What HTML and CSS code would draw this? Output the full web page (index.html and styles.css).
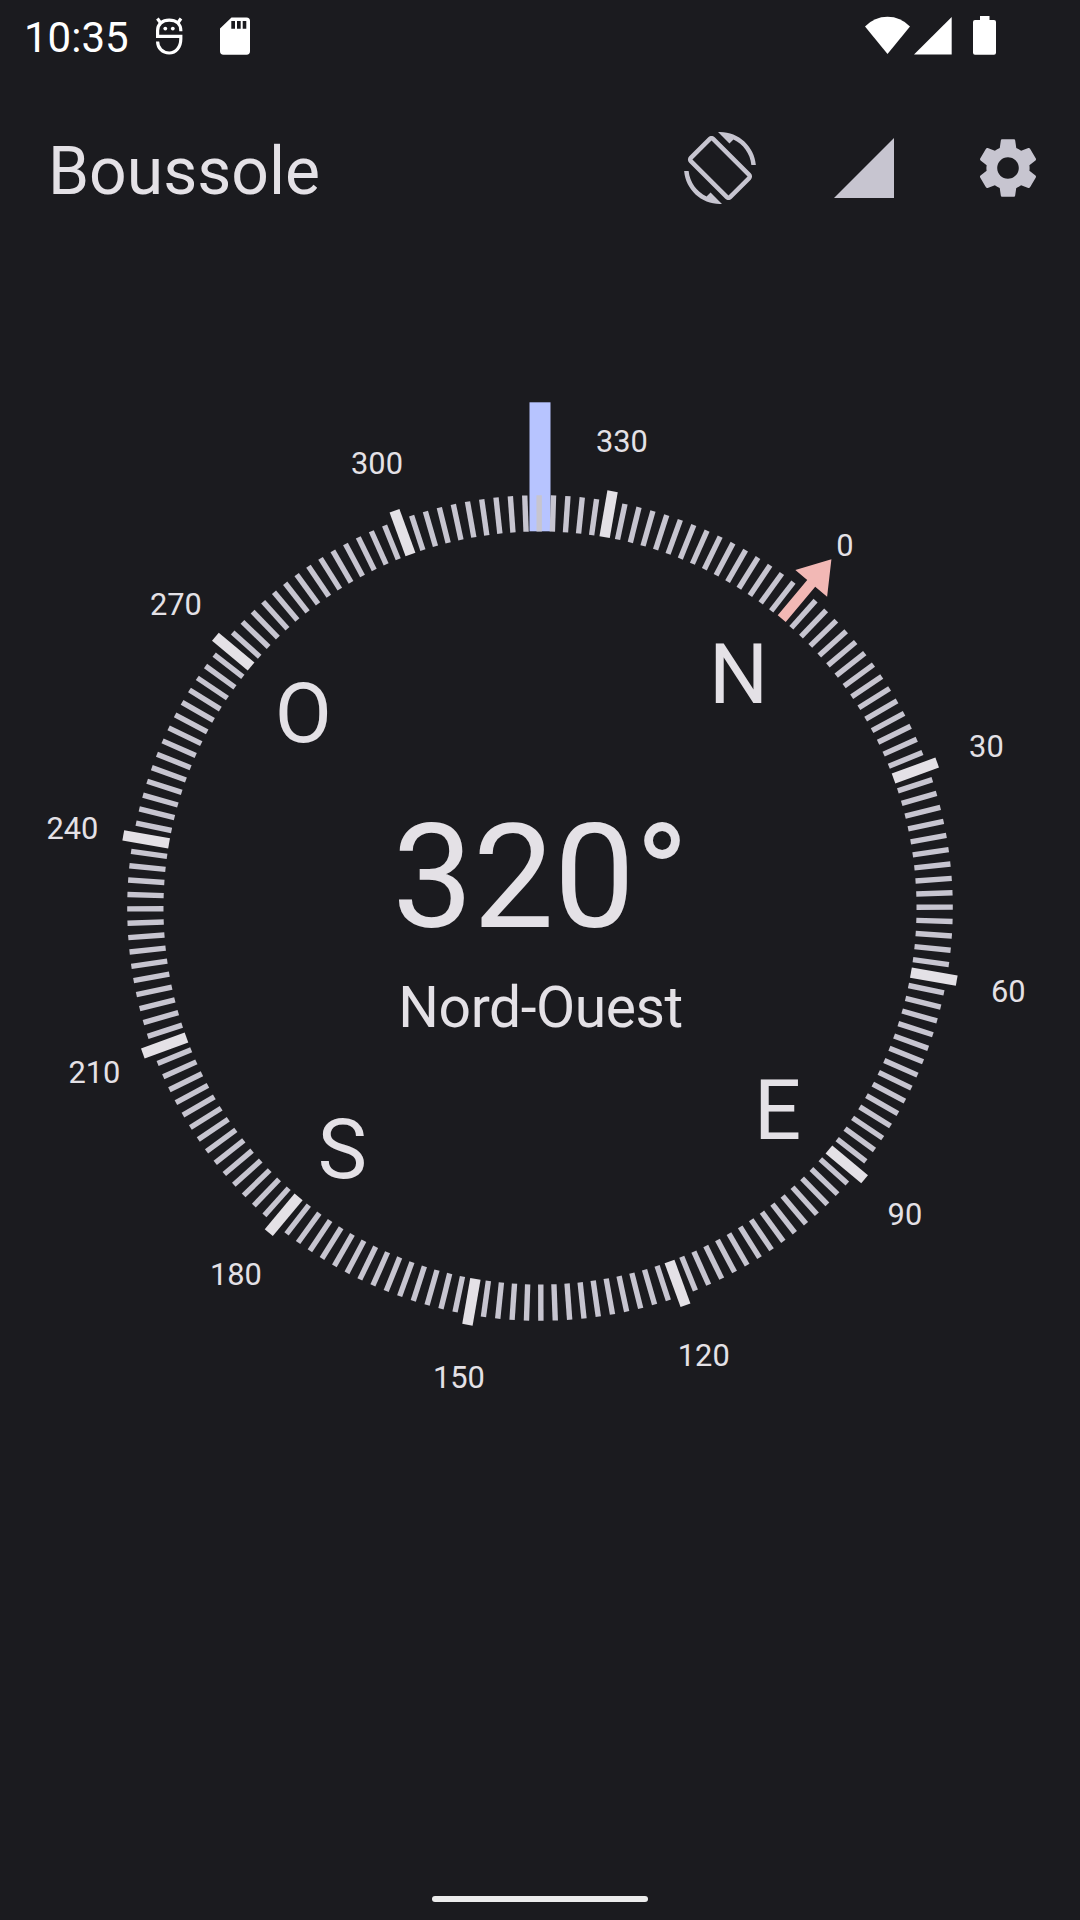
FILE: index.html
```html
<!DOCTYPE html>
<html lang="fr">
<head>
<meta charset="utf-8">
<title>Boussole</title>
<link rel="stylesheet" href="styles.css">
</head>
<body>
<div class="screen">
  <div class="status-bar">
    <span class="clock">10:35</span>
    <svg class="status-icon status-app" viewBox="0 0 30 40" width="30" height="40">
      <g fill="none" stroke="#fff" stroke-width="3.2">
        <path d="M26.800 15.300V14.500C26.800 8 22 4.200 15.200 4.200S3.600 8 3.600 14.500V20.400H26.800V23C26.800 31 22 37 15.200 37C8.500 37 3.600 32 3.600 25.500"/>
        <path d="M3.400 2.500L7 7.500M27 2.500L23.400 7.500"/>
      </g>
      <circle cx="11.300" cy="12.600" r="1.900" fill="#fff"/><circle cx="18.800" cy="12.600" r="1.900" fill="#fff"/>
    </svg>
    <svg class="status-icon status-sd" viewBox="0 0 30 38" width="30" height="38">
      <path fill="#fff" fill-rule="evenodd" d="M11.500 .5H26.500Q30 .5 30 4V34.300Q30 37.700 26.500 37.700H3.500Q0 37.700 0 34.300V11.500ZM11.300 4V11.800H15V4ZM17 4V11.800H20.700V4ZM22.700 4V11.800H26.300V4Z"/>
    </svg>
    <div class="status-right">
      <svg viewBox="0 0 45 38" width="45" height="38"><path fill="#fff" d="M0 10.400Q9.500 .7 22.500 .7T45 10.400L22.500 38Z"/></svg>
      <svg class="status-signal" viewBox="0 0 38 38" width="38" height="38"><path fill="#fff" d="M0 37.500H37.700V0Z"/></svg>
      <svg class="status-battery" viewBox="0 0 23 39" width="23" height="39"><path fill="#fff" d="M7 0H16.500V4H21Q23 4 23 6V36.700Q23 38.700 21 38.700H2Q0 38.700 0 36.700V6Q0 4 2 4H7Z"/></svg>
    </div>
  </div>
  <header class="app-bar">
    <h1 class="title">Boussole</h1>
    <div class="actions">
      <svg class="action" viewBox="0 0 24 24"><path d="M16.480 2.520c3.270 1.550 5.610 4.720 5.970 8.480h1.500C23.440 4.840 18.290 0 12 0l-.66.03 3.810 3.810 1.330-1.320zm-6.250-.77c-.59-.59-1.540-.59-2.120 0L1.750 8.110c-.59.59-.59 1.540 0 2.120l12.020 12.020c.59.59 1.540.59 2.120 0l6.360-6.360c.59-.59.59-1.540 0-2.120L10.230 1.750zm4.600 19.440L2.810 9.170l6.360-6.360 12.020 12.020-6.360 6.360zm-7.310.29C4.250 19.940 1.910 16.760 1.550 13H.05C.56 19.160 5.710 24 12 24l.66-.03-3.810-3.810-1.330 1.320z"/></svg>
      <svg class="action" viewBox="0 0 24 24"><path d="M2 22h20V2z"/></svg>
      <svg class="action" viewBox="0 0 24 24"><path d="M19.140 12.940c.04-.3.06-.61.06-.94 0-.32-.02-.64-.07-.94l2.030-1.580c.18-.14.23-.41.12-.61l-1.920-3.320c-.12-.22-.37-.29-.59-.22l-2.390.96c-.5-.38-1.030-.7-1.620-.94l-.36-2.540c-.04-.24-.24-.41-.48-.41h-3.840c-.24 0-.43.17-.47.41l-.36 2.540c-.59.24-1.130.57-1.620.94l-2.390-.96c-.22-.08-.47 0-.59.22L2.740 8.870c-.12.21-.08.47.12.61l2.030 1.580c-.05.3-.09.63-.09.94s.02.64.07.94l-2.030 1.580c-.18.14-.23.41-.12.61l1.920 3.320c.12.22.37.29.59.22l2.390-.96c.5.38 1.030.7 1.620.94l.36 2.540c.05.24.24.41.48.41h3.840c.24 0 .44-.17.47-.41l.36-2.540c.59-.24 1.130-.56 1.620-.94l2.390.96c.22.08.47 0 .59-.22l1.920-3.320c.12-.22.07-.47-.12-.61l-2.010-1.580zM12 15.600c-1.980 0-3.600-1.620-3.600-3.600s1.620-3.600 3.600-3.600 3.600 1.620 3.600 3.600-1.620 3.600-3.600 3.600z"/></svg>
    </div>
  </header>
  <main class="compass">
    <svg id="dial" viewBox="-540 -540 1080 1080" width="1080" height="1080">
      <rect class="heading-mark" x="-10.500" y="-505.700" width="21" height="129"/>
      <g id="ticks"></g>
      <text class="azimuth" x="0.400" y="19">320°</text>
      <text class="direction" x="0.500" y="119">Nord-Ouest</text>
    </svg>
  </main>
  <div class="nav-bar"><div class="nav-handle"></div></div>
</div>
<script src="compass.js"></script>
</body>
</html>
```
FILE: compass.js
```js
const NS = 'http://www.w3.org/2000/svg';
const NORTH = 39.88;
const dial = document.getElementById('dial');
const ticks = document.getElementById('ticks');

function add(parent, tag, attrs, text) {
  const el = document.createElementNS(NS, tag);
  for (const k in attrs) el.setAttribute(k, attrs[k]);
  if (text !== undefined) el.textContent = text;
  parent.appendChild(el);
}

function label(text, degrees, radius, dy, cls) {
  const a = (degrees + NORTH) * Math.PI / 180;
  add(dial, 'text', {
    class: cls,
    x: (radius * Math.sin(a) + 0.4).toFixed(2),
    y: (-radius * Math.cos(a) + dy).toFixed(2)
  }, text);
}

for (let d = 0; d < 360; d += 2) {
  const transform = `rotate(${d + NORTH})`;
  if (d === 0) {
    add(ticks, 'path', { class: 'north', d: 'M-5.2 -377V-423H-20.7L0 -454.5L20.7 -423H5.2V-377Z', transform });
  } else {
    const major = d % 30 === 0;
    add(ticks, 'line', { class: major ? 'tick major' : 'tick', y1: -376.5, y2: major ? -423 : -412.8, transform });
  }
  if (d % 30 === 0) label(String(d), d, 475, 12, 'degree');
}

['N', 'E', 'S', 'O'].forEach((c, i) => label(c, i * 90, 309, 32.5, 'cardinal'));
```
FILE: styles.css
```css
body {
  margin: 0;
  background: #1b1b1f;
  font-family: Roboto, sans-serif;
  color: #e4e1e6;
}

.screen {
  width: 1080px;
  height: 1920px;
  display: flex;
  flex-direction: column;
  overflow: hidden;
}

svg { display: block; flex: none; }

.status-bar {
  height: 72px;
  box-sizing: border-box;
  padding: 16px 84px 0 24px;
  display: flex;
  color: #fff;
}

.clock {
  width: 108px;
  padding-top: 1px;
  font-size: 42px;
  line-height: 42px;
}

.status-app { margin-left: 22px; }
.status-sd { margin: 1px 0 0 36px; }

.status-right {
  margin-left: auto;
  display: flex;
}

.status-signal { margin: 1px 0 0 4px; }
.status-battery { margin-left: 21px; }

.app-bar {
  height: 192px;
  box-sizing: border-box;
  padding: 0 36px 0 48px;
  display: flex;
  align-items: center;
  justify-content: space-between;
}

.title {
  margin: 7px 0 0;
  font-size: 66px;
  line-height: 78px;
  font-weight: 400;
}

.actions { display: flex; gap: 72px; }

.action {
  width: 72px;
  height: 72px;
  fill: #c7c5d0;
}

.compass { flex: 1; padding-top: 104px; }

.heading-mark { fill: #b7c4ff; }
.tick { stroke: #c7c5d0; stroke-width: 5.4; }
.major { stroke: #e4e1e6; stroke-width: 10.5; }
.north { fill: #f2b8b5; }

text { fill: #e4e1e6; text-anchor: middle; }
.degree { font-size: 30.8px; }
.cardinal { font-size: 83px; }
.azimuth { font-size: 144px; }
.direction { font-size: 57px; letter-spacing: -0.45px; }

.nav-bar {
  height: 24px;
  display: flex;
  justify-content: center;
}

.nav-handle {
  width: 216px;
  height: 6px;
  border-radius: 3px;
  background: #ececec;
}
```
